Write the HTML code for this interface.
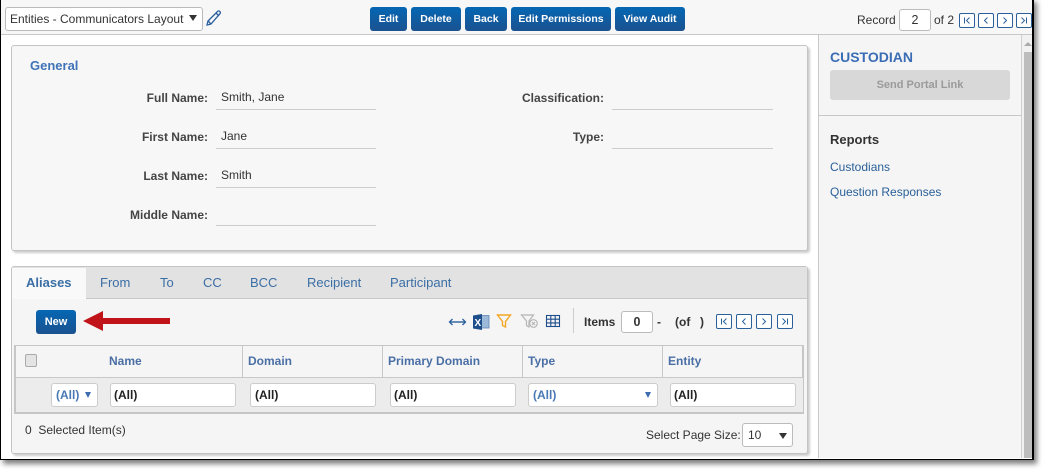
<!DOCTYPE html>
<html><head><meta charset="utf-8"><style>
html,body{margin:0;padding:0;width:1049px;height:475px;overflow:hidden;background:#fff}
*{box-sizing:border-box}
body{font-family:"Liberation Sans",sans-serif;font-size:12px;color:#333}
.a{position:absolute;white-space:nowrap}
#frame{position:absolute;left:0;top:-2px;width:1034px;height:462px;background:#fff;border:1px solid #000;border-width:0 2px 1px 1px;box-shadow:3px 4px 5px rgba(0,0,0,.5)}
.btn{position:absolute;top:7px;height:24px;border-radius:3px;background:linear-gradient(#0567b3,#1b5290);color:#fff;font-weight:bold;font-size:10.5px;line-height:24px;text-align:center}
.lbl{position:absolute;font-weight:bold;color:#444;text-align:right;width:120px;line-height:14px}
.val{position:absolute;left:216px;width:160px;height:26px;border-bottom:1px solid #ccc;padding-left:5px;line-height:27px;color:#333}
.pg{position:absolute;width:16px;height:15px;border:1px solid #2a6099;border-radius:2px;background:#fff}
.pg svg{position:absolute;left:0;top:0}
.tab{position:absolute;top:275px;font-size:13px;color:#3a6ea5;line-height:15px}
.th{position:absolute;top:354px;font-weight:bold;color:#4a6fa5;line-height:14px}
.inp{position:absolute;top:383px;height:24px;background:#fff;border:1px solid #ccc;border-radius:3px;font-weight:bold;line-height:22px;padding-left:3px;color:#222}
.v{position:absolute;top:346px;width:1px;height:31px;background:#c8c8c8}
</style></head><body>
<div id="frame"></div>
<div class="a" style="left:1px;top:0;width:1031px;height:458px;background:#fff"></div>
<!-- top bar -->
<div class="a" style="left:1px;top:0;width:1031px;height:35px;background:#f7f7f7;border-bottom:1px solid #c8c8c8"></div>
<div class="a" style="left:5px;top:7px;width:198px;height:24px;background:#fff;border:1px solid #bbb;border-radius:3px;line-height:22px;padding-left:4px;color:#333">Entities - Communicators Layout</div>
<div class="a" style="left:189px;top:15px;width:0;height:0;border:4px solid transparent;border-top:6px solid #333;border-bottom:0"></div>
<svg class="a" style="left:205px;top:9px" width="18" height="18" viewBox="0 0 18 18" fill="none" stroke="#2a5f9e" stroke-width="1.3"><path d="M2 16l1-4L12.5 2.5c.8-.8 1.8-.8 2.4 0s.6 1.6 0 2.2L6 15z"/><path d="M11 4l3 3M3.2 12l2.6 2.8"/></svg>
<div class="btn" style="left:370px;width:37px">Edit</div>
<div class="btn" style="left:411px;width:50px">Delete</div>
<div class="btn" style="left:465px;width:42px">Back</div>
<div class="btn" style="left:511px;width:100px">Edit Permissions</div>
<div class="btn" style="left:615px;width:70px">View Audit</div>
<div class="a" style="left:857px;top:13px;line-height:14px">Record</div>
<div class="a" style="left:899px;top:9px;width:32px;height:22px;background:#fff;border:1px solid #bbb;border-radius:3px;text-align:center;line-height:20px;font-size:12.5px">2</div>
<div class="a" style="left:934px;top:13px;line-height:14px">of 2</div>
<div class="pg" style="left:959px;top:13px"><svg width="14" height="13" fill="none" stroke="#2a6099"><path d="M4.5 3.5v6M9.5 3.5l-3 3 3 3"/></svg></div>
<div class="pg" style="left:978px;top:13px"><svg width="14" height="13" fill="none" stroke="#2a6099"><path d="M8.500 3.500l-3 3 3 3"/></svg></div>
<div class="pg" style="left:997px;top:13px"><svg width="14" height="13" fill="none" stroke="#2a6099"><path d="M5.500 3.500l3 3-3 3"/></svg></div>
<div class="pg" style="left:1016px;top:13px"><svg width="14" height="13" fill="none" stroke="#2a6099"><path d="M4.500 3.500l3 3-3 3M9.500 3.500v6"/></svg></div>
<!-- right col -->
<div class="a" style="left:818px;top:35px;width:214px;height:423px;background:#f5f5f5;border-left:1px solid #c8c8c8"></div>
<div class="a" style="left:1021px;top:35px;width:1px;height:423px;background:#d0d0d0"></div>
<div class="a" style="left:1022px;top:35px;width:10px;height:423px;background:#f1f1f1"></div>
<div class="a" style="left:1024px;top:52px;width:8px;height:406px;background:#bdbdbd"></div>
<div class="a" style="left:1024px;top:42px;width:0;height:0;border:4px solid transparent;border-bottom:4px solid #aaa;border-top:0"></div>
<div class="a" style="left:830px;top:49px;font-weight:bold;font-size:14px;color:#3a6db5;line-height:16px">CUSTODIAN</div>
<div class="a" style="left:830px;top:70px;width:180px;height:30px;background:#d8d8d8;border-radius:3px;text-align:center;color:#9a9a9a;font-weight:bold;font-size:11px;line-height:30px">Send Portal Link</div>
<div class="a" style="left:819px;top:115px;width:202px;height:1px;background:#c8c8c8"></div>
<div class="a" style="left:830px;top:132px;font-weight:bold;font-size:13px;color:#333;line-height:15px">Reports</div>
<div class="a" style="left:830px;top:160px;color:#2a6099;line-height:14px">Custodians</div>
<div class="a" style="left:830px;top:185px;color:#2a6099;line-height:14px">Question Responses</div>
<!-- general -->
<div class="a" style="left:11px;top:45px;width:797px;height:206px;background:#f7f7f7;border:1px solid #c4c4c4;border-radius:3px;box-shadow:2px 2px 2px #ccc"></div>
<div class="a" style="left:30px;top:58px;font-weight:bold;font-size:13px;color:#3f74b8;line-height:15px">General</div>
<div class="lbl" style="left:88px;top:91px">Full Name:</div><div class="val" style="top:84px">Smith, Jane</div>
<div class="lbl" style="left:88px;top:130px">First Name:</div><div class="val" style="top:123px">Jane</div>
<div class="lbl" style="left:88px;top:169px">Last Name:</div><div class="val" style="top:162px">Smith</div>
<div class="lbl" style="left:88px;top:208px">Middle Name:</div><div class="val" style="top:200px"></div>
<div class="lbl" style="left:484px;top:91px">Classification:</div><div class="val" style="top:84px;left:612px;width:161px"></div>
<div class="lbl" style="left:484px;top:130px">Type:</div><div class="val" style="top:123px;left:612px;width:161px"></div>
<!-- lower panel -->
<div class="a" style="left:11px;top:266px;width:797px;height:188px;background:#f5f5f5;border:1px solid #c4c4c4;border-radius:3px;box-shadow:2px 2px 2px #ccc"></div>
<div class="a" style="left:12px;top:267px;width:795px;height:32px;background:#e2e2e2;border-bottom:1px solid #c8c8c8"></div>
<div class="a" style="left:12px;top:268px;width:74px;height:31px;background:#f9f9f9"></div>
<div class="tab" style="left:26px;font-weight:bold">Aliases</div>
<div class="tab" style="left:100px">From</div>
<div class="tab" style="left:160px">To</div>
<div class="tab" style="left:203px">CC</div>
<div class="tab" style="left:250px">BCC</div>
<div class="tab" style="left:307px">Recipient</div>
<div class="tab" style="left:390px">Participant</div>
<div class="btn" style="left:36px;top:310px;width:40px;font-size:11px">New</div>
<svg class="a" style="left:80px;top:308px" width="95" height="26"><path d="M3 13L23 3v7h67v6H23v7z" fill="#c0141a"/></svg>
<!-- toolbar icons -->
<svg class="a" style="left:448px;top:314px" width="19" height="15" fill="none" stroke="#2a5f9e" stroke-width="1.4"><path d="M2 8h15"/><path d="M4.500 5L1.500 8l3 3M14.500 5l3 3-3 3" stroke-width="1.300"/></svg>
<svg class="a" style="left:472px;top:313px" width="18" height="18"><rect x="7" y="2.500" width="10" height="12.500" fill="#9db9da" stroke="#5f86b5" stroke-width=".8"/><path d="M1 2.500L10 1v16l-9-1.500z" fill="#1f4e8c"/><text x="2.500" y="13" font-family="Liberation Sans" font-size="10" font-weight="bold" fill="#fff">X</text></svg>
<svg class="a" style="left:496px;top:313px" width="16" height="16" fill="none" stroke="#f5a623" stroke-width="1.400"><path d="M1.500 2h13L9.500 8.500V14l-3-1.500v-4z"/></svg>
<svg class="a" style="left:520px;top:313px" width="19" height="16" fill="none" stroke="#b5b5b5" stroke-width="1.200"><path d="M1.500 2h12L9 8v6l-2.500-1.500V8z"/><circle cx="13.500" cy="10.500" r="3.800"/><path d="M12 9l3 3M15 9l-3 3"/></svg>
<svg class="a" style="left:545px;top:314px" width="16" height="14" fill="none" stroke="#1f4e8c" stroke-width="1.100"><rect x="1.500" y="1.500" width="13" height="11"/><path d="M1.500 5.200h13M1.500 8.900h13M5.800 1.500v11M10.200 1.500v11"/></svg>
<div class="a" style="left:573px;top:308px;width:1px;height:25px;background:#ccc"></div>
<div class="a" style="left:584px;top:315px;font-weight:bold;color:#333;line-height:14px">Items</div>
<div class="a" style="left:621px;top:311px;width:32px;height:22px;background:#fff;border:1px solid #bbb;border-radius:3px;text-align:center;line-height:20px;font-weight:bold;font-size:12.500px">0</div>
<div class="a" style="left:657px;top:315px;font-weight:bold;line-height:14px">-</div>
<div class="a" style="left:675px;top:315px;font-weight:bold;line-height:14px">(of</div>
<div class="a" style="left:700px;top:315px;font-weight:bold;line-height:14px">)</div>
<div class="pg" style="left:716px;top:314px"><svg width="14" height="13" fill="none" stroke="#2a6099"><path d="M4.500 3.500v6M9.500 3.500l-3 3 3 3"/></svg></div>
<div class="pg" style="left:736px;top:314px"><svg width="14" height="13" fill="none" stroke="#2a6099"><path d="M8.500 3.500l-3 3 3 3"/></svg></div>
<div class="pg" style="left:756px;top:314px"><svg width="14" height="13" fill="none" stroke="#2a6099"><path d="M5.500 3.500l3 3-3 3"/></svg></div>
<div class="pg" style="left:777px;top:314px"><svg width="14" height="13" fill="none" stroke="#2a6099"><path d="M4.500 3.500l3 3-3 3M9.500 3.500v6"/></svg></div>
<!-- table -->
<div class="a" style="left:14px;top:345px;width:790px;height:69px;background:#f5f5f5;border:2px solid #c6c6c6;border-top:1px solid #c6c6c6"></div>
<div class="a" style="left:16px;top:377px;width:787px;height:1px;background:#c8c8c8"></div>
<div class="a" style="left:16px;top:378px;width:787px;height:34px;background:#ececec"></div>
<div class="v" style="left:242px"></div><div class="v" style="left:382px"></div><div class="v" style="left:522px"></div><div class="v" style="left:662px"></div>
<div class="a" style="left:25px;top:354px;width:12px;height:13px;background:#e4e4e4;border:1px solid #aaa;border-radius:2px"></div>
<div class="th" style="left:109px">Name</div><div class="th" style="left:248px">Domain</div><div class="th" style="left:388px">Primary Domain</div><div class="th" style="left:528px">Type</div><div class="th" style="left:668px">Entity</div>
<div class="inp" style="left:51px;width:47px;color:#4a78b5;padding-left:4px">(All)</div>
<div class="a" style="left:85px;top:392px;width:0;height:0;border:3.500px solid transparent;border-top:6px solid #3f6cae;border-bottom:0"></div>
<div class="inp" style="left:110px;width:126px">(All)</div>
<div class="inp" style="left:250px;width:126px;padding-left:4px">(All)</div>
<div class="inp" style="left:390px;width:126px">(All)</div>
<div class="inp" style="left:528px;width:130px;color:#4a78b5;padding-left:4px">(All)</div>
<div class="a" style="left:645px;top:392px;width:0;height:0;border:3.500px solid transparent;border-top:6px solid #3f6cae;border-bottom:0"></div>
<div class="inp" style="left:670px;width:126px">(All)</div>
<div class="a" style="left:25px;top:423px;line-height:14px">0&nbsp; Selected Item(s)</div>
<div class="a" style="left:646px;top:428px;line-height:14px">Select Page Size:</div>
<div class="a" style="left:742px;top:423px;width:51px;height:24px;background:#fff;border:1px solid #bbb;border-radius:3px;line-height:22px;padding-left:5px">10</div>
<div class="a" style="left:779px;top:433px;width:0;height:0;border:4px solid transparent;border-top:6px solid #333;border-bottom:0"></div>
</body></html>
